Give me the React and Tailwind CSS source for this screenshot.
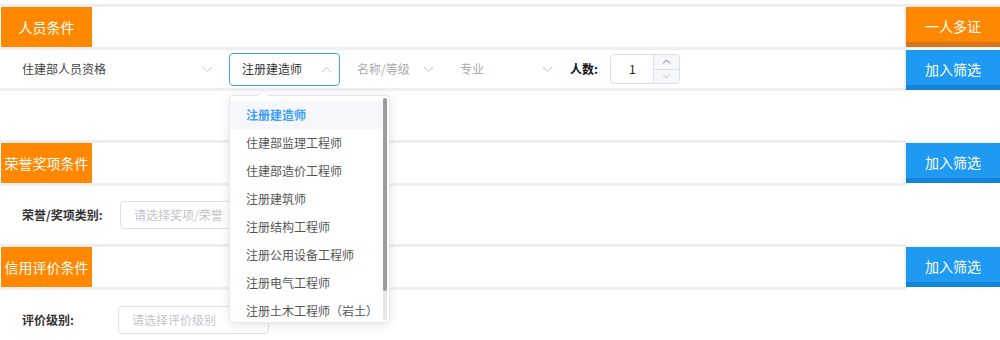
import React from "react";

const font = { fontFamily: '"Noto Sans CJK SC", "Noto Sans", sans-serif' };

function Chevron({ up = false, className = "" }) {
  return (
    <svg width="11" height="7" viewBox="0 0 11 7" className={className}>
      <polyline
        points={up ? "1,6 5.5,1.5 10,6" : "1,1 5.5,5.5 10,1"}
        fill="none"
        stroke="#c0c4cc"
        strokeWidth="1"
      />
    </svg>
  );
}

function Line() {
  return <div className="h-[3px] bg-[#efefef]" />;
}

function Label({ children }) {
  return (
    <div className="ml-[1px] flex h-[40px] w-[91px] items-center justify-center bg-[#ff8800] text-[14px] text-white">
      {children}
    </div>
  );
}

function Btn({ children, orange = false }) {
  return (
    <div
      className={
        "flex h-[40px] w-[94px] items-center justify-center border-b-[5px] pt-[4px] text-[14px] text-white shadow-[-1px_0_2px_rgba(0,0,0,0.12)] " +
        (orange
          ? "bg-[#ff8800] border-[#d77418]"
          : "bg-[#1f9af2] border-[#1383d8]")
      }
    >
      {children}
    </div>
  );
}

const items = [
  "注册建造师",
  "住建部监理工程师",
  "住建部造价工程师",
  "注册建筑师",
  "注册结构工程师",
  "注册公用设备工程师",
  "注册电气工程师",
  "注册土木工程师（岩土）",
];

export default function App() {
  return (
    <div className="relative h-[340px] w-[1000px] overflow-hidden bg-white" style={font}>
      <div className="h-[4px]" />
      <Line />
      {/* Section 1 */}
      <div className="flex">
        <div className="flex-1">
          <div className="h-[40px]">
            <Label>人员条件</Label>
          </div>
          <Line />
          <div className="flex h-[38px] items-center text-[12px]">
            <div className="ml-[9px] flex w-[212px] items-center justify-between pl-[13px] pr-[8px] text-[#444]">
              <span>住建部人员资格</span>
              <Chevron />
            </div>
            <div className="ml-[8px] flex h-[33px] w-[111px] items-center justify-between rounded-[4px] border border-[#409eff] pl-[12px] pr-[7px] text-[#333]">
              <span>注册建造师</span>
              <Chevron up />
            </div>
            <div className="ml-[4px] flex w-[98px] items-center justify-between pl-[13px] pr-[8px] text-[#aaa]">
              <span>名称/等级</span>
              <Chevron />
            </div>
            <div className="ml-[5px] flex w-[114px] items-center justify-between pl-[13px] pr-[8px] text-[#aaa]">
              <span>专业</span>
              <Chevron />
            </div>
            <div className="ml-[9px] font-bold text-[#111]">人数:</div>
            <div className="ml-[12px] flex h-[30px] w-[70px] overflow-hidden rounded-[4px] border border-[#dcdfe6]">
              <div className="flex flex-1 items-center pl-[18px] text-[12px] text-[#222]">1</div>
              <div className="flex w-[26px] flex-col border-l border-[#dcdfe6] bg-[#f5f7fa]">
                <div className="flex flex-1 items-center justify-center border-b border-[#dcdfe6]">
                  <svg width="9" height="5" viewBox="0 0 9 5">
                    <polyline points="1,4.5 4.5,1 8,4.5" fill="none" stroke="#777" strokeWidth="1" />
                  </svg>
                </div>
                <div className="flex flex-1 items-center justify-center">
                  <svg width="9" height="5" viewBox="0 0 9 5">
                    <polyline points="1,0.5 4.5,4 8,0.5" fill="none" stroke="#c0c4cc" strokeWidth="1" />
                  </svg>
                </div>
              </div>
            </div>
          </div>
          <Line />
          <div className="h-[49px]" />
        </div>
        <div className="flex w-[94px] flex-col gap-[3px]">
          <Btn orange>一人多证</Btn>
          <Btn>加入筛选</Btn>
        </div>
      </div>

      {/* Section 2 */}
      <div className="flex">
        <div className="flex-1">
          <Line />
          <Label>荣誉奖项条件</Label>
          <Line />
          <div className="flex h-[58px] items-center text-[12px]">
            <div className="w-[120px] pl-[22px] font-semibold text-[#333]">荣誉/奖项类别:</div>
            <div className="flex h-[28px] w-[150px] items-center rounded-[4px] border border-[#dcdfe6] pl-[13px] text-[#c0c4cc]">
              请选择奖项/荣誉
            </div>
          </div>
        </div>
        <div className="w-[94px] pt-[3px]">
          <Btn>加入筛选</Btn>
        </div>
      </div>

      {/* Section 3 */}
      <div className="flex">
        <div className="flex-1">
          <Line />
          <Label>信用评价条件</Label>
          <Line />
          <div className="flex h-[60px] items-center text-[12px]">
            <div className="w-[118px] pl-[22px] font-semibold text-[#333]">评价级别:</div>
            <div className="flex h-[28px] w-[151px] items-center rounded-[4px] border border-[#dcdfe6] pl-[13px] text-[#c0c4cc]">
              请选择评价级别
            </div>
          </div>
        </div>
        <div className="w-[94px] pt-[3px]">
          <Btn>加入筛选</Btn>
        </div>
      </div>

      {/* Dropdown */}
      <div className="absolute left-[229px] top-[95px] h-[228px] w-[161px] rounded-[4px] border border-[#e4e7ed] bg-white shadow-[0_2px_12px_rgba(0,0,0,0.1)]">
        <div className="absolute left-[27px] top-[-6px] h-0 w-0 border-x-[6px] border-b-[6px] border-x-transparent border-b-[#e4e7ed]" />
        <div className="absolute left-[28px] top-[-5px] h-0 w-0 border-x-[5px] border-b-[5px] border-x-transparent border-b-white" />
        <div className="h-full overflow-hidden pt-[5px]">
          {items.map((t, i) => (
            <div
              key={t}
              className={
                "mr-[7px] flex h-[28px] items-center whitespace-nowrap pl-[16px] text-[12px] " +
                (i === 0 ? "bg-[#f5f7fa] text-[#409eff] font-semibold" : "text-[#555]")
              }
            >
              {t}
            </div>
          ))}
        </div>
        <div className="absolute right-[2px] top-[2px] h-[222px] w-[4px] rounded-full bg-[#e6e6e6]" />
        <div className="absolute right-[2px] top-[2px] h-[193px] w-[4px] rounded-full bg-[#9c9c9c]" />
      </div>
    </div>
  );
}
